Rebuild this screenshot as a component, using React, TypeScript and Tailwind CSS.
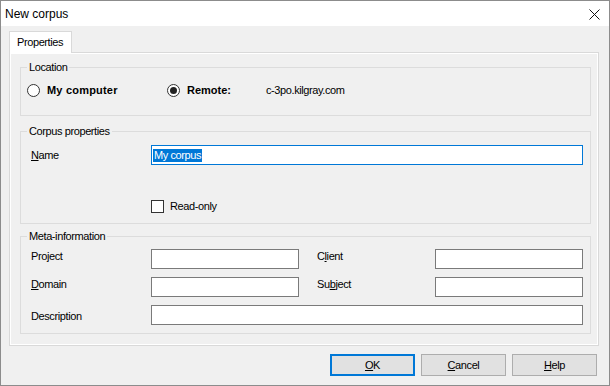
import React from 'react';

const Group: React.FC<{ title: string; className: string; children: React.ReactNode }> = ({ title, className, children }) => (
  <div className={`ml-[10px] w-[571px] border border-[#dcdcdc] ${className}`}>
    <div className="-mt-[7px] ml-[6px] w-fit bg-[#f0f0f0] px-[2px] leading-[13px]">{title}</div>
    {children}
  </div>
);

const Field: React.FC<{ w: string }> = ({ w }) => (
  <div className={`${w} h-[20px] border border-[#7a7a7a] bg-white`} />
);

const Radio: React.FC<{ checked?: boolean }> = ({ checked }) => (
  <div className="w-[13px] h-[13px] rounded-full border border-[#333] bg-white flex items-center justify-center">
    {checked && <div className="w-[7px] h-[7px] rounded-full bg-[#222]" />}
  </div>
);

const Btn: React.FC<{ children: React.ReactNode; primary?: boolean }> = ({ children, primary }) => (
  <div
    className={
      primary
        ? 'w-[85px] h-[22px] border-2 border-[#0078d7] bg-[#e1e1e1] flex items-center justify-center'
        : 'w-[85px] h-[22px] border border-[#adadad] bg-[#e1e1e1] flex items-center justify-center'
    }
  >
    {children}
  </div>
);

export default function App() {
  return (
    <div className="w-[610px] h-[386px] border border-[#8c8c8c] bg-[#f0f0f0] flex flex-col font-['Liberation_Sans',Arial,sans-serif] text-[11px] tracking-[-0.4px] text-black">
      {/* title bar */}
      <div className="h-[25px] bg-white flex items-center justify-between pl-[4px] pr-[9px]">
        <span className="text-[12px] tracking-normal">New corpus</span>
        <svg width="11" height="11" viewBox="0 0 11 11" className="mt-[1px]">
          <path d="M0.5 0.5 L10.5 10.5 M10.5 0.5 L0.5 10.5" stroke="#111" strokeWidth="1" />
        </svg>
      </div>

      <div className="flex-1 flex flex-col pl-[8px] pr-[11px] pt-[5px]">
        <div className="relative z-10 -mb-px w-[63px] h-[22px] border border-b-0 border-[#d9d9d9] bg-white pl-[7px] flex items-center">
          Properties
        </div>

        <div className="w-[590px] h-[294px] border border-[#d9d9d9] shadow-[inset_1px_1px_0_#fff,inset_-1px_-1px_0_#fff] pt-[14px]">
          <Group title="Location" className="h-[49px]">
            <div className="mt-[9px] pl-[6px] flex items-center h-[14px]">
              <div className="w-[140px] flex items-center gap-[7px]">
                <Radio />
                <span className="font-bold tracking-[0.2px]">My computer</span>
              </div>
              <div className="w-[99px] flex items-center gap-[7px]">
                <Radio checked />
                <span className="font-bold tracking-[0px]">Remote:</span>
              </div>
              <span>c-3po.kilgray.com</span>
            </div>
          </Group>

          <Group title="Corpus properties" className="mt-[15px] h-[93px]">
            <div className="mt-[7px] pl-[10px] flex items-center">
              <span className="w-[120px]">
                <u>N</u>ame
              </span>
              <div className="w-[432px] h-[20px] border border-[#0078d7] bg-white flex items-center pl-[1px]">
                <span className="bg-[#0078d7] text-white leading-[13px] px-[1px]">My corpus</span>
              </div>
            </div>
            <div className="mt-[33px] pl-[130px] flex items-center gap-[6px]">
              <div className="w-[13px] h-[13px] border border-[#333] bg-white" />
              <span>Read-only</span>
            </div>
          </Group>

          <Group title="Meta-information" className="mt-[12px] h-[98px]">
            <div className="mt-[6px] pl-[10px] flex flex-col gap-[8px]">
              <div className="flex items-center">
                <span className="w-[120px] -mt-[5px]">
                  Pro<u>j</u>ect
                </span>
                <Field w="w-[148px]" />
                <span className="ml-[18px] w-[118px] -mt-[5px]">
                  C<u>l</u>ient
                </span>
                <Field w="w-[148px]" />
              </div>
              <div className="flex items-center">
                <span className="w-[120px] -mt-[5px]">
                  <u>D</u>omain
                </span>
                <Field w="w-[148px]" />
                <span className="ml-[18px] w-[118px] -mt-[5px]">
                  Su<u>b</u>ject
                </span>
                <Field w="w-[148px]" />
              </div>
              <div className="flex items-center">
                <span className="w-[120px] mt-[2px]">Description</span>
                <Field w="w-[432px]" />
              </div>
            </div>
          </Group>
        </div>

        <div className="mt-[8px] flex justify-end gap-[6px] pr-[1px]">
          <Btn primary>
            <span>
              <u>O</u>K
            </span>
          </Btn>
          <Btn>
            <span>
              <u>C</u>ancel
            </span>
          </Btn>
          <Btn>
            <span>
              <u>H</u>elp
            </span>
          </Btn>
        </div>
      </div>
    </div>
  );
}
